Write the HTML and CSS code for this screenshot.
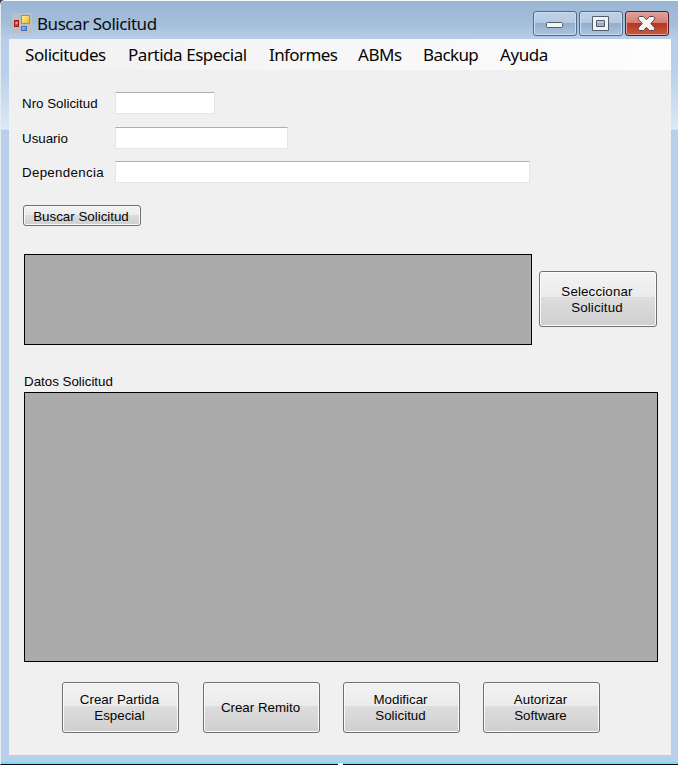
FILE: index.html
```html
<!DOCTYPE html>
<html lang="es">
<head>
<meta charset="utf-8">
<title>Buscar Solicitud</title>
<link rel="stylesheet" href="styles.css">
</head>
<body>
<div class="window">
  <header class="titlebar">
    <svg class="app-icon" width="20" height="20" viewBox="0 0 20 20">
      <defs>
        <linearGradient id="gold" x1="0" y1="0" x2="1" y2="1"><stop offset="0" stop-color="#fff3a5"/><stop offset="1" stop-color="#edb51b"/></linearGradient>
        <linearGradient id="blue" x1="0" y1="0" x2="1" y2="1"><stop offset="0" stop-color="#a5c8fb"/><stop offset="1" stop-color="#477ce0"/></linearGradient>
      </defs>
      <rect width="20" height="20" fill="#b8bfc5"/>
      <rect x="9.500" y="2.500" width="8" height="8" fill="url(#gold)" stroke="#c28e16"/>
      <rect x="2.500" y="7.500" width="4" height="6" fill="#d64532" stroke="#a31b16"/>
      <rect x="3.500" y="9" width="2" height="2" fill="#f0a08f"/>
      <rect x="9.500" y="13.500" width="5" height="4" fill="url(#blue)" stroke="#466fc0"/>
    </svg>
    <h1 class="title">Buscar Solicitud</h1>
    <div class="controls">
      <button class="control" aria-label="Minimizar"><svg width="42" height="23" viewBox="0 0 42 23"><rect x="12.500" y="10.500" width="16" height="5" rx="1" fill="#f5f5f5" stroke="#535c6b"/></svg></button>
      <button class="control" aria-label="Maximizar"><svg width="42" height="23" viewBox="0 0 42 23"><path d="M12.500 4.500h16v14h-16zM16.500 8.500v6h8v-6z" fill="#f3f3f3" fill-rule="evenodd" stroke="#535c6b" stroke-linejoin="round"/></svg></button>
      <button class="control close" aria-label="Cerrar"><svg width="42" height="23" viewBox="0 0 42 23"><path d="M13.500 4.500h4l3 3.200 3-3.200h4l1.300 1.500v1l-4 4.500 4 4.500v1l-1.300 1.500h-4l-3-3.200-3 3.200h-4l-1.300-1.500v-1l4-4.500-4-4.500V6z" fill="#f5f5f5" stroke="#5a4850" stroke-linejoin="round"/></svg></button>
    </div>
  </header>
  <main class="client">
    <nav class="menu">
      <span class="item solicitudes">Solicitudes</span>
      <span class="item partida">Partida Especial</span>
      <span class="item informes">Informes</span>
      <span class="item abms">ABMs</span>
      <span class="item backup">Backup</span>
      <span class="item">Ayuda</span>
    </nav>
    <form class="form">
      <label class="label" for="nro">Nro Solicitud</label><input class="field short" id="nro">
      <label class="label" for="usuario">Usuario</label><input class="field medium" id="usuario">
      <label class="label wide" for="dep">Dependencia</label><input class="field long" id="dep">
    </form>
    <button class="button search">Buscar Solicitud</button>
    <div class="results">
      <div class="grid"></div>
      <button class="button select">Seleccionar<br>Solicitud</button>
    </div>
    <h2 class="label heading">Datos Solicitud</h2>
    <div class="grid details"></div>
    <footer class="actions">
      <button class="button">Crear Partida<br>Especial</button>
      <button class="button">Crear Remito</button>
      <button class="button">Modificar<br>Solicitud</button>
      <button class="button">Autorizar<br>Software</button>
    </footer>
  </main>
  <i class="handle"></i>
</div>
</body>
</html>
```
FILE: styles.css
```css
* { box-sizing: border-box; }
body { margin: 0; background: #35424d; }
.window {
  position: relative;
  width: 678px;
  height: 765px;
  padding: 0 7px 0 8px;
  border: solid;
  border-width: 1px 0 1px 1px;
  border-color: #f5fafd #e8f5fc #080b0d #e5edf3;
  border-top-left-radius: 5px;
  background:
    linear-gradient(#78dcf7, #78dcf7) bottom / 100% 2px no-repeat,
    linear-gradient(#9ab5d2 0, #a5bfdb 24px, #b8cee8 38px, #b9d0ea 70px, #dce8f5 127px, #e8f0f8 128px, #b9d0ea 129px);
}
.titlebar { display: flex; height: 38px; padding-left: 3px; }
.app-icon { flex: none; margin-top: 12px; }
.title { margin: 9px 0 0 5px; font: 17px/27px "Noto Sans", sans-serif; letter-spacing: -.45px; color: #080c10; white-space: nowrap; }
.controls { display: flex; gap: 2px; margin: 10px 2px 0 auto; }
.control {
  width: 44px;
  height: 25px;
  padding: 0;
  border: 1px solid #526b8b;
  border-radius: 3px;
  box-shadow: inset 0 0 0 1px #cbdcee;
  background: linear-gradient(#bfd2e7, #b5cae2 46%, #91adca 47%, #acc5df);
}
.control svg { display: block; }
.close { border-color: #541c28; box-shadow: inset 0 0 0 1px #dca49e; background: linear-gradient(#e2a29b, #d37f74 46%, #b5351f 47%, #c85a43); }
.client { width: 662px; height: 716px; background: #f0f0f0; }
.menu { display: flex; height: 31px; padding-left: 16px; background: linear-gradient(90deg, #f1f1f1, #fdfdfd); }
.item { flex: none; font: 17px/32px "Noto Sans", sans-serif; letter-spacing: -.45px; white-space: nowrap; color: #050505; }
.solicitudes { width: 103px; }
.partida { width: 141px; }
.informes { width: 89px; letter-spacing: -.6px; }
.abms { width: 65px; }
.backup { width: 77px; letter-spacing: -.6px; }
.form { display: grid; grid-template-columns: 93px 415px; grid-template-rows: 22px 22px 22px; row-gap: 12.500px; padding: 22px 0 0 13px; }
.label, .button { font: 13.333px/16px "Liberation Sans", sans-serif; color: #050505; letter-spacing: 0; }
.label { padding-top: 4px; }
.wide { letter-spacing: .3px; }
.field { height: 22px; border: 1px solid #e2e7ec; border-top-color: #abadb3; padding: 2px 4px; background: #fff; }
.short { width: 100px; }
.medium { width: 173px; }
.long { width: 415px; }
.button {
  width: 118px;
  padding: 0 2px 0 0;
  border: 1px solid #707070;
  border-radius: 3px;
  box-shadow: inset 0 0 0 1px #fafafa;
  background: linear-gradient(#f3f3f3, #ebebeb 46%, #dddddd 47%, #cfcfcf);
}
.search { display: block; height: 21px; margin: 22px 0 0 14px; padding-top: 2px; line-height: 17px; }
.results { display: flex; gap: 7px; margin: 28px 0 0 15px; }
.grid { width: 508px; height: 91px; border: 1px solid #000; background: #ababab; }
.select { height: 56px; margin-top: 17px; padding-top: 2px; letter-spacing: .15px; }
.heading { height: 19px; margin: 28px 0 0 15px; padding: 1px 0 0; }
.details { width: 634px; height: 270px; margin-left: 15px; }
.actions { display: flex; gap: 23px; margin: 20px 0 0 53px; }
.actions .button { width: 117px; height: 51px; }
.actions .button:first-child { margin-right: 1px; }
.handle { position: absolute; left: 337px; bottom: -1px; width: 5px; height: 2px; background: #fff; border-radius: 1px 1px 0 0; }
```
